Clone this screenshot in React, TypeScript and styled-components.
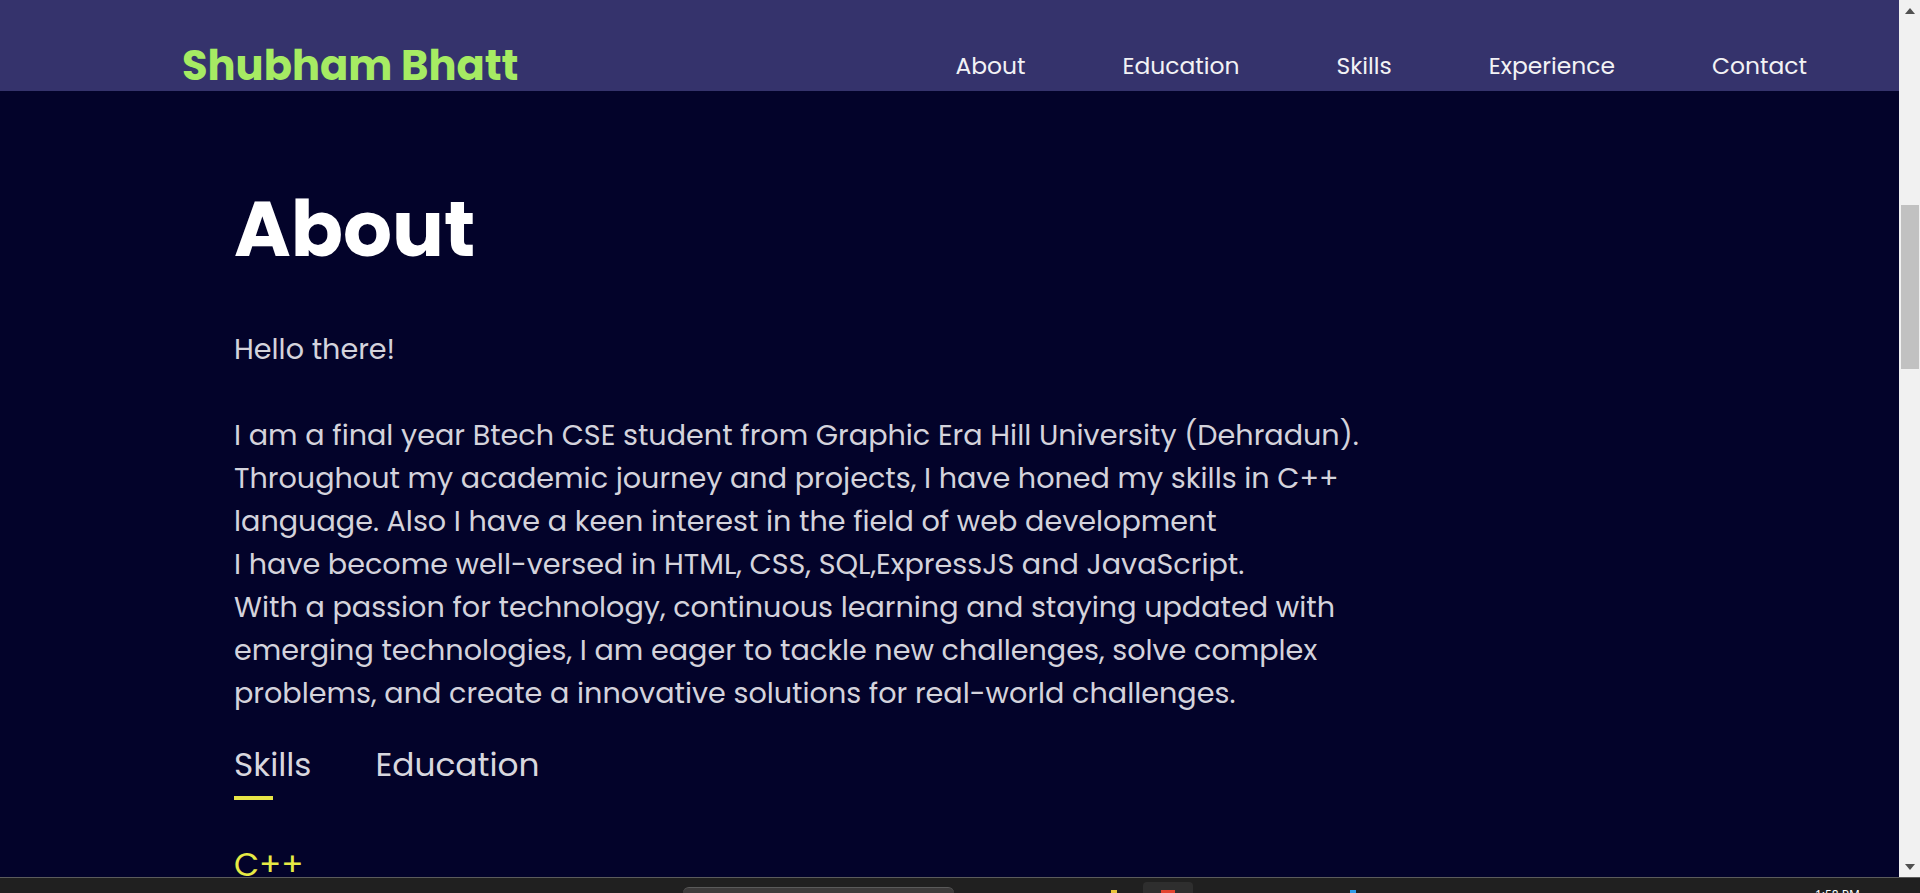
import * as React from 'react'
import styled, { createGlobalStyle } from 'styled-components'

const GlobalStyle = createGlobalStyle`
    * {
        box-sizing: border-box;
    }
    html, body {
        margin: 0;
        padding: 0;
        overflow: hidden;
        background: #03032a;
    }
`

const FONT = `"Poppins", "Inter", "Noto Sans", sans-serif`

const navItems = ['About', 'Education', 'Skills', 'Experience', 'Contact']

const App = () => (
    <>
        <GlobalStyle />
        <Screen>
            <Viewport>
                <Page>
                    <NavBar>
                        <Logo>Shubham Bhatt</Logo>
                        <NavList>
                            {navItems.map(item => (
                                <NavItem key={item}>{item}</NavItem>
                            ))}
                        </NavList>
                    </NavBar>
                    <AboutSection>
                        <Title>About</Title>
                        <Text>
                            Hello there!
                            <br />
                            <br />
                            I am a final year Btech CSE student from Graphic Era Hill University (Dehradun).
                            <br />
                            Throughout my academic journey and projects, I have honed my skills in C++
                            <br />
                            language. Also I have a keen interest in the field of web development
                            <br />
                            I have become well-versed in HTML, CSS, SQL,ExpressJS and JavaScript.
                            <br />
                            With a passion for technology, continuous learning and staying updated with
                            <br />
                            emerging technologies, I am eager to tackle new challenges, solve complex
                            <br />
                            problems, and create a innovative solutions for real-world challenges.
                        </Text>
                        <Tabs>
                            <Tab active>Skills</Tab>
                            <Tab>Education</Tab>
                        </Tabs>
                        <SkillName>C++</SkillName>
                    </AboutSection>
                </Page>
                <ScrollBar>
                    <ScrollArrow>
                        <svg width="10" height="6" viewBox="0 0 10 6">
                            <path d="M5 0 L10 6 L0 6 Z" fill="#505050" />
                        </svg>
                    </ScrollArrow>
                    <ScrollTrack>
                        <ScrollThumb />
                    </ScrollTrack>
                    <ScrollArrow>
                        <svg width="10" height="6" viewBox="0 0 10 6">
                            <path d="M0 0 L10 0 L5 6 Z" fill="#505050" />
                        </svg>
                    </ScrollArrow>
                </ScrollBar>
            </Viewport>
            <Taskbar>
                <SearchBox />
                <TaskIcon color="#e8c43a" />
                <ActiveTask>
                    <TaskIcon color="#e2432f" />
                </ActiveTask>
                <TaskIcon color="#2f9be8" />
                <Clock>1:58 PM</Clock>
            </Taskbar>
        </Screen>
    </>
)

export default App

const Screen = styled.div`
    width: 1920px;
    height: 893px;
    display: flex;
    flex-direction: column;
    overflow: hidden;
`

const Viewport = styled.div`
    height: 877px;
    display: flex;
`

const Page = styled.div`
    flex: 1;
    background: #03032a;
    overflow: hidden;
    font-family: ${FONT};
`

const NavBar = styled.header`
    height: 91px;
    padding: 39px 92px 0 182px;
    background: #35336c;
    display: flex;
    align-items: center;
    justify-content: space-between;
`

const Logo = styled.div`
    color: #a6eb63;
    font-size: 41.6px;
    font-weight: 700;
`

const NavList = styled.nav`
    display: flex;
    align-items: center;
    gap: 97px;
`

const NavItem = styled.a`
    color: #f2f2f5;
    font-size: 23.4px;
    font-weight: 400;
    text-decoration: none;
`

const AboutSection = styled.section`
    padding: 90px 0 0 234px;
`

const Title = styled.h1`
    margin: 0;
    color: #ffffff;
    font-size: 77px;
    font-weight: 700;
    line-height: 96px;
`

const Text = styled.p`
    margin: 51px 0 0;
    color: #d4d3dc;
    font-size: 28.65px;
    line-height: 43px;
    white-space: nowrap;
`

const Tabs = styled.div`
    margin-top: 29px;
    display: flex;
    gap: 64px;
`

const Tab = styled.span<{ active?: boolean }>`
    position: relative;
    color: #d8d7de;
    font-size: 32.8px;
    line-height: 41px;

    &::after {
        content: '';
        display: ${props => (props.active ? 'block' : 'none')};
        position: absolute;
        left: 0;
        bottom: -15px;
        width: 50%;
        height: 4px;
        background: #e8e547;
    }
`

const SkillName = styled.div`
    margin-top: 62px;
    color: #e6ea45;
    font-size: 32.5px;
    line-height: 36px;
`

const ScrollBar = styled.div`
    width: 21px;
    background: #f1f1f1;
    display: flex;
    flex-direction: column;
`

const ScrollArrow = styled.div`
    height: 21px;
    display: flex;
    align-items: center;
    justify-content: center;
`

const ScrollTrack = styled.div`
    flex: 1;
    padding: 184px 1px 0 2px;
`

const ScrollThumb = styled.div`
    height: 164px;
    background: #c1c1c1;
`

const Taskbar = styled.footer`
    height: 16px;
    border-top: 1px solid #5c5c5c;
    background: #202020;
    display: flex;
    align-items: flex-end;
`

const SearchBox = styled.div`
    margin-left: 683px;
    width: 271px;
    height: 6px;
    border-radius: 10px 10px 0 0;
    background: #3d3b3b;
    border-top: 1px solid #5a5a5a;
`

const TaskIcon = styled.div<{ color: string }>`
    width: 6px;
    height: 3px;
    margin-left: 157px;
    background: ${props => props.color};
`

const ActiveTask = styled.div`
    margin-left: 26px;
    width: 50px;
    height: 11px;
    border-radius: 4px 4px 0 0;
    background: #2e2e2e;
    display: flex;
    align-items: flex-end;
    justify-content: center;

    & > div {
        margin-left: 0;
        width: 14px;
    }
`

const Clock = styled.div`
    margin-left: auto;
    margin-right: 60px;
    height: 4px;
    overflow: hidden;
    color: #ffffff;
    font-family: "Segoe UI", "Noto Sans", sans-serif;
    font-size: 12px;
    line-height: 12px;
`
